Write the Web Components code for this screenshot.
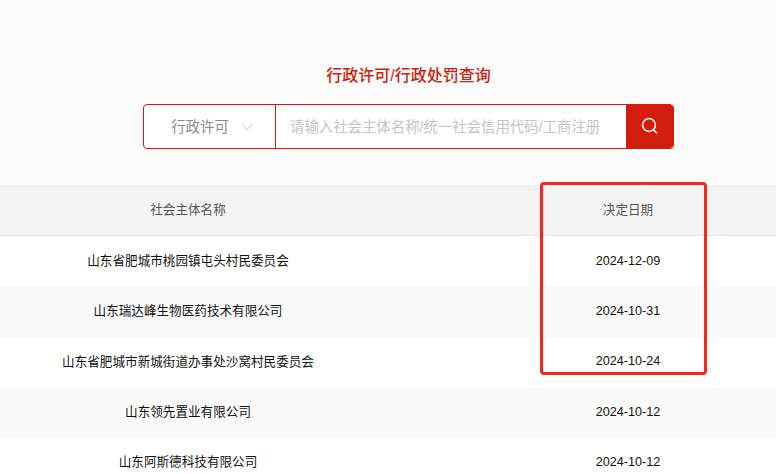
<!DOCTYPE html>
<html lang="zh">
<head>
<meta charset="utf-8">
<title>行政许可/行政处罚查询</title>
<style>
  html, body {
    margin: 0;
    height: 474px;
    overflow: hidden;
    background: #fbfbfb;
    font-family: "Liberation Sans", "Noto Sans CJK SC", sans-serif;
  }
</style>
</head>
<body>
<query-page>
  <search-bar title="行政许可/行政处罚查询" type="行政许可" placeholder="请输入社会主体名称/统一社会信用代码/工商注册"></search-bar>
  <result-table>
    <result-row name="山东省肥城市桃园镇屯头村民委员会" date="2024-12-09"></result-row>
    <result-row name="山东瑞达峰生物医药技术有限公司" date="2024-10-31"></result-row>
    <result-row name="山东省肥城市新城街道办事处沙窝村民委员会" date="2024-10-24"></result-row>
    <result-row name="山东领先置业有限公司" date="2024-10-12"></result-row>
    <result-row name="山东阿斯德科技有限公司" date="2024-10-12"></result-row>
  </result-table>
  <mark-box></mark-box>
</query-page>

<script>
class QueryPage extends HTMLElement {
  constructor() {
    super();
    this.attachShadow({ mode: 'open' });
    this.shadowRoot.innerHTML = `
      <style>
        :host {
          display: block;
          position: relative;
          width: 776px;
          height: 474px;
          overflow: hidden;
          padding-top: 65px;
          box-sizing: border-box;
        }
      </style>
      <slot></slot>
    `;
  }
}

class SearchBar extends HTMLElement {
  constructor() {
    super();
    this.attachShadow({ mode: 'open' });
  }

  connectedCallback() {
    const title = this.getAttribute('title') || '';
    const type = this.getAttribute('type') || '';
    const placeholder = this.getAttribute('placeholder') || '';

    this.shadowRoot.innerHTML = `
      <style>
        :host {
          display: block;
          width: 531px;
          margin: 0 0 36px 143px;
        }

        h2 {
          margin: 0 0 18px;
          font-size: 16px;
          line-height: 21px;
          font-weight: 500;
          text-align: center;
          color: #d01d0c;
        }

        .bar {
          display: flex;
          height: 45px;
          box-sizing: border-box;
          background: #fff;
          border-radius: 4px;
          overflow: hidden;
          border: 1px solid #d01d0c;
        }

        .type {
          flex: none;
          width: 132px;
          display: flex;
          align-items: center;
          justify-content: center;
          gap: 12px;
          padding: 0 0 2px 5px;
          box-sizing: border-box;
          border-right: 1px solid #d01d0c;
          font-size: 14.4px;
          color: #858a94;
        }

        .type svg {
          display: block;
          margin-top: 3px;
        }

        .field {
          flex: 1;
          display: flex;
          align-items: center;
          padding: 0 0 2px 14px;
          font-size: 14.4px;
          color: #c0c4cc;
          white-space: nowrap;
          overflow: hidden;
        }

        .go {
          flex: none;
          width: 48px;
          margin: -1px -1px -1px 0;
          padding-bottom: 2px;
          box-sizing: border-box;
          display: flex;
          align-items: center;
          justify-content: center;
          background: #d01d0c;
        }
      </style>
      <h2>${title}</h2>
      <div class="bar">
        <div class="type">
          <span>${type}</span>
          <svg width="12" height="8" viewBox="0 0 12 8" fill="none" stroke="#c0c4cc" stroke-width="1">
            <path d="M1 1.5 6 6.5l5-5"/>
          </svg>
        </div>
        <div class="field">${placeholder}</div>
        <div class="go">
          <svg width="18" height="18" viewBox="0 0 18 18" fill="none" stroke="#fff" stroke-width="1.5">
            <circle cx="8" cy="8" r="6.4"/>
            <path d="M12.8 13 15.6 16" stroke-linecap="round"/>
          </svg>
        </div>
      </div>
    `;
  }
}

class ResultTable extends HTMLElement {
  constructor() {
    super();
    this.attachShadow({ mode: 'open' });
    this.shadowRoot.innerHTML = `
      <style>
        :host {
          display: block;
        }

        .head {
          display: grid;
          grid-template-columns: 376px 104px 296px;
          height: 50.4px;
          align-items: center;
          text-align: center;
          background: #f3f3f3;
          border-bottom: 1px solid #e6e6e6;
          font-size: 12.6px;
          color: #555;
        }

        .name { grid-column: 1; padding-bottom: 4px; }
        .date { grid-column: 3; padding-bottom: 4px; }
      </style>
      <div class="head">
        <div class="name">社会主体名称</div>
        <div class="date">决定日期</div>
      </div>
      <slot></slot>
    `;
  }
}

class ResultRow extends HTMLElement {
  constructor() {
    super();
    this.attachShadow({ mode: 'open' });
  }

  connectedCallback() {
    const name = this.getAttribute('name') || '';
    const date = this.getAttribute('date') || '';

    this.shadowRoot.innerHTML = `
      <style>
        :host {
          display: grid;
          grid-template-columns: 376px 104px 296px;
          height: 50.4px;
          align-items: center;
          text-align: center;
          font-size: 12.6px;
          color: #111;
          background: #fff;
        }

        :host(:nth-of-type(even)) {
          background: #fafafa;
        }

        .name { grid-column: 1; padding-bottom: 4.6px; }
        .date { grid-column: 3; padding-bottom: 2px; }
      </style>
      <div class="name">${name}</div>
      <div class="date">${date}</div>
    `;
  }
}

class MarkBox extends HTMLElement {
  constructor() {
    super();
    this.attachShadow({ mode: 'open' });
    this.shadowRoot.innerHTML = `
      <style>
        :host {
          position: absolute;
          left: 540px;
          top: 182px;
          width: 167px;
          height: 193px;
          box-sizing: border-box;
          border: 3px solid #f5271c;
          border-radius: 4px;
        }
      </style>
    `;
  }
}

customElements.define('query-page', QueryPage);
customElements.define('search-bar', SearchBar);
customElements.define('result-table', ResultTable);
customElements.define('result-row', ResultRow);
customElements.define('mark-box', MarkBox);
</script>
</body>
</html>
